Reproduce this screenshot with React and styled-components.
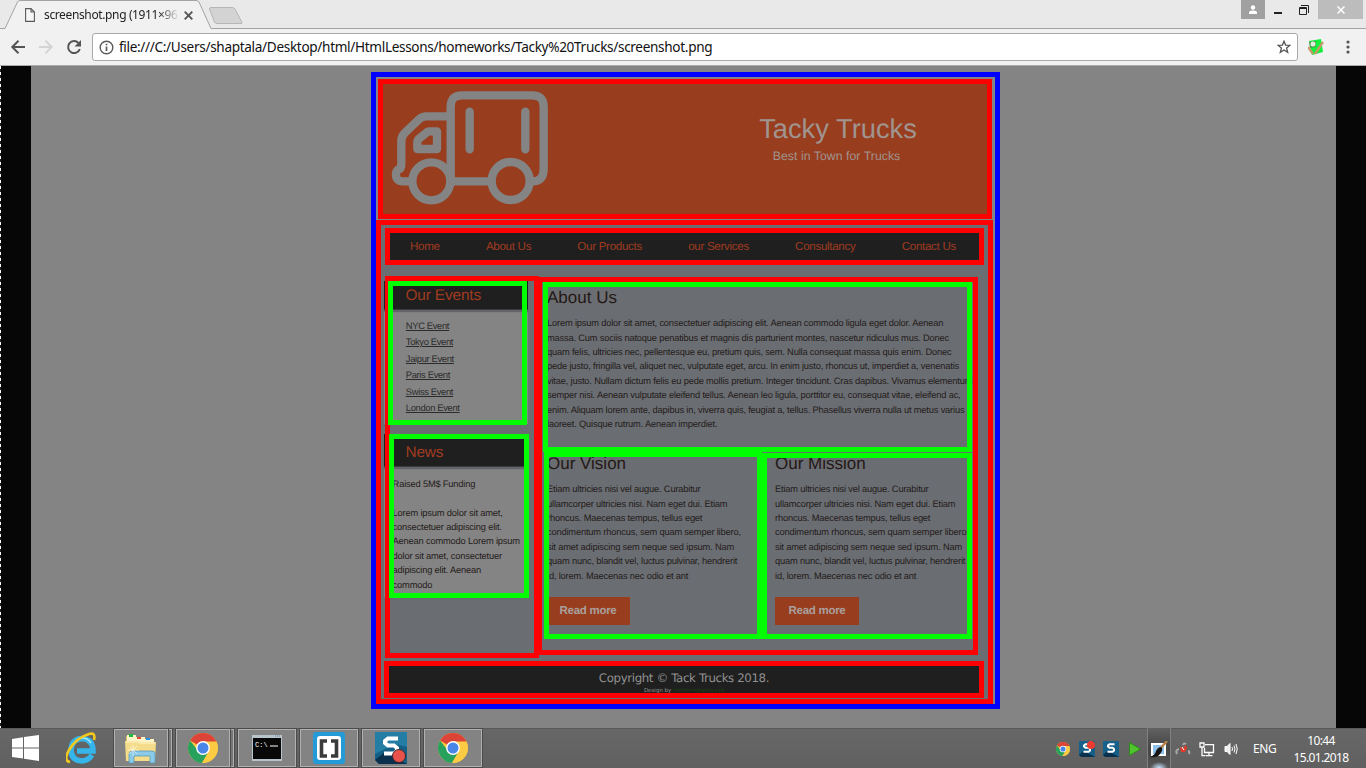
import React from "react";
import styled, { createGlobalStyle, css } from "styled-components";

const Global = createGlobalStyle`
  * { box-sizing: border-box; }
  body { margin: 0; width: 1366px; height: 768px; overflow: hidden; background: #848484; font-family: "Liberation Sans", Arial, sans-serif; }
  h1, h2, p, ul { margin: 0; padding: 0; font-weight: normal; }
  svg { display: block; flex: none; }
`;

const Screen = styled.div`
  width: 1366px;
  height: 768px;
  display: flex;
  flex-direction: column;
`;

/* ---------- browser chrome ---------- */
const TabStrip = styled.div`
  height: 29px;
  flex: none;
  display: flex;
  align-items: flex-start;
  background: #e9e9e9;
  border-bottom: 1px solid #a3a3a3;
`;
const Tab = styled.div`
  position: relative;
  width: 212px;
  height: 29px;
  display: flex;
  align-items: center;
  padding: 1px 0 0 25px;
`;
const TabShape = styled.svg`
  position: absolute;
  left: 0;
  top: 0;
`;
const TabTitle = styled.span`
  position: relative;
  width: 133px;
  margin-left: 9px;
  white-space: nowrap;
  font: 12px/18px "Noto Sans", sans-serif;
  letter-spacing: -0.37px;
  color: #222;
  mask-image: linear-gradient(90deg, #000 86%, transparent 102%);
`;
const TabIcon = styled.svg`
  position: relative;
`;
const TabClose = styled(TabIcon)`
  margin-left: 7px;
`;
const WindowButtons = styled.div`
  margin-left: auto;
  display: flex;
  height: 19px;
`;
const WindowButton = styled.div`
  width: ${(p) => p.$w}px;
  height: 19px;
  margin-right: ${(p) => p.$gap || 0}px;
  background: ${(p) => p.$bg || "transparent"};
  display: flex;
  align-items: center;
  justify-content: center;
`;
const Toolbar = styled.div`
  height: 37px;
  flex: none;
  display: flex;
  align-items: center;
  padding: 0 10px;
  background: #f1f1f1;
  border-bottom: 1px solid #aaa;
`;
const AddressBar = styled.div`
  width: 1206px;
  height: 28px;
  margin-left: 10px;
  padding: 0 6px;
  display: flex;
  align-items: center;
  gap: 5px;
  background: #fff;
  border: 1px solid #a9a9a9;
  border-radius: 3px;
`;
const Url = styled.span`
  flex: 1;
  font: 13.6px/20px "Noto Sans", sans-serif;
  letter-spacing: -0.33px;
  color: #111;
  white-space: nowrap;
`;
const Extension = styled.svg`
  margin-left: 10px;
`;
const MenuDots = styled.svg`
  margin-left: 22px;
`;

/* ---------- viewport ---------- */
const Viewport = styled.div`
  height: 662px;
  flex: none;
  display: flex;
  background: #848484;
`;
const Band = styled.div`
  width: ${(p) => p.$w}px;
  background: #060606;
`;
const Dashes = styled.div`
  width: 1px;
  background: repeating-linear-gradient(#fff 0 3px, #222 3px 6px);
`;
const Stage = styled.div`
  width: 1305px;
  padding: 6px 0 0 340px;
`;
const Site = styled.div`
  width: 629px;
  height: 637px;
  border: 5px solid #00f;
  text-rendering: geometricPrecision;
`;
const Header = styled.header`
  width: 614px;
  height: 140px;
  margin: 2px 0 1px 2px;
  border: 5px solid #f00;
  background: #983d1e;
  display: flex;
  justify-content: space-between;
  padding: 5px 70px 0 7px;
`;
const Brand = styled.div`
  width: 158px;
  padding-top: 24px;
  text-align: center;
  white-space: nowrap;
  color: #a0948f;
`;
const BrandName = styled.h1`
  font-size: 27.3px;
  line-height: 32px;
`;
const Tagline = styled.p`
  font-size: 12.3px;
  line-height: 16px;
  margin-top: 3px;
  padding-right: 3px;
  letter-spacing: 0.03px;
`;
const Main = styled.main`
  width: 617px;
  height: 484px;
  border: 5px solid #f00;
  background: #6a6d72;
`;
const Nav = styled.nav`
  width: 599px;
  height: 37px;
  margin: 3px 0 11px 4px;
  padding: 0 23px 0 20px;
  border: 5px solid #f00;
  background: #1f1f1f;
  display: flex;
  justify-content: space-between;
  align-items: center;
  color: #a03b20;
  font-size: 11.6px;
  letter-spacing: -0.31px;
  line-height: 14px;
`;
const Columns = styled.div`
  height: 382px;
  display: flex;
  align-items: flex-start;
  padding-left: 4px;
`;
/* Coloured rectangle laid over the block that it marks. */
const Outline = styled.div`
  position: absolute;
  inset: ${(p) => p.$inset || "0"};
  border: 5px solid ${(p) => p.$color};
  z-index: ${(p) => p.$z || 1};
`;
const Sidebar = styled.aside`
  position: relative;
  width: 154px;
  height: 382px;
  padding-top: 5px;
`;
const Widget = styled.section`
  position: relative;
  width: 144px;
  height: ${(p) => p.$h}px;
  margin: 0 0 10px -1px;
  background: #848484;
`;
const WidgetTitle = styled.h2`
  height: ${(p) => p.$h}px;
  padding: ${(p) => p.$top}px 0 0 21.5px;
  background: #1f1f1f;
  border-bottom: 1px solid #3a3b3e;
  box-shadow: 0 2px 1px #62646a;
  color: #a03b20;
  font-size: 15.4px;
  letter-spacing: -0.15px;
  line-height: 18px;
`;
const EventList = styled.ul`
  padding: 8px 0 0 21.8px;
  list-style: none;
  font-size: 9.4px;
  letter-spacing: -0.34px;
  line-height: 16.4px;
  color: #2b2b2b;
  li { height: 16.4px; text-decoration: underline; }
`;
const copy = css`
  font-size: 9.3px;
  line-height: 14.36px;
  letter-spacing: -0.175px;
  color: #241c1a;
  white-space: pre;
`;
const NewsText = styled.p`
  ${copy}
  padding: 10px 0 0 8.6px;
`;
const Content = styled.div`
  position: relative;
  width: 441px;
  height: 378px;
  margin: 1px 0 0 -2px;
  padding: 5px 6px 0 6px;
`;
const Block = styled.section`
  position: relative;
  width: ${(p) => p.$w}px;
  height: ${(p) => p.$h}px;
  padding: ${(p) => p.$pad};
`;
const Pair = styled.div`
  display: flex;
  padding-left: 1px;
`;
const Heading = styled.h2`
  font-size: 17px;
  line-height: 20px;
  color: #241815;
  white-space: nowrap;
`;
const Copy = styled.p`
  ${copy}
  margin-top: ${(p) => p.$top}px;
`;
const ReadMore = styled.div`
  width: 84px;
  height: 28px;
  margin: 14px 0 0 ${(p) => p.$shift || 0}px;
  background: #983d1e;
  color: #a9a09d;
  font-size: 11.5px;
  letter-spacing: -0.28px;
  font-weight: bold;
  line-height: 28px;
  text-align: center;
`;
const Footer = styled.footer`
  width: 600px;
  height: 37px;
  margin: 3px 0 0 3px;
  padding-top: 4px;
  border: 5px solid #f00;
  background: #1f1f1f;
  overflow: hidden;
  text-align: center;
  color: #919191;
  font: 11.8px/17px "DejaVu Sans", sans-serif;
  letter-spacing: -0.38px;
`;
const Credit = styled.div`
  font-size: 5.5px;
  line-height: 8px;
  letter-spacing: 0;
  span { color: #1d4416; }
`;

/* ---------- taskbar ---------- */
const Taskbar = styled.div`
  height: 40px;
  flex: none;
  display: flex;
  align-items: stretch;
  background: linear-gradient(#5a5a5a 0 1px, #676767 1px, #606060);
`;
const Launcher = styled.div`
  width: ${(p) => p.$w}px;
  display: flex;
  align-items: center;
  justify-content: center;
`;
const TaskButton = styled.div`
  width: ${(p) => p.$w}px;
  height: 40px;
  margin-right: ${(p) => p.$gap}px;
  display: flex;
  align-items: center;
  justify-content: center;
  border: 1px solid #4b4b4b;
  box-shadow: inset 0 0 0 1px #b0b0b0;
  background: #838383;
`;
const StackEdge = styled.div`
  width: 5px;
  height: 40px;
  margin: 0 2px 0 -1px;
  border: 1px solid #4b4b4b;
  box-shadow: inset -1px 1px 0 #b0b0b0, inset 0 -1px 0 #b0b0b0;
  background: #777;
`;
const Tray = styled.div`
  margin-left: auto;
  display: flex;
  align-items: center;
  padding-right: 17px;
  color: #fff;
  font: 12px/17px "Noto Sans", sans-serif;
`;
const TrayIcon = styled.div`
  width: 24px;
  height: 40px;
  padding-top: 2px;
  display: flex;
  align-items: center;
  justify-content: center;
  ${(p) => p.$active && css`
    background: radial-gradient(ellipse 9px 6px at 50% 100%, #c8e4ff, transparent), linear-gradient(#626262, #454545 50%, #565656);
    border: solid #808080;
    border-width: 0 1px;
  `}
`;
const Language = styled.div`
  width: 24px;
  margin: 1px 16px 0 10px;
  letter-spacing: -0.4px;
`;
const Clock = styled.div`
  width: 56px;
  text-align: center;
  letter-spacing: -0.65px;
  white-space: nowrap;
  padding-top: 1px;
`;

const Truck = () => (
  <svg width="160" height="117" viewBox="75 69 480 351" fill="none" stroke="#848484" strokeWidth="25" strokeLinecap="round" strokeLinejoin="round">
    <path d="M257 340V122Q257 88 291 88H502Q536 88 536 122V308Q536 346 503 346M262 346H372" />
    <path strokeLinecap="butt" d="M257 151H183Q172 151 163 159L119 201Q109 211 109 225V295Q109 309 101 310Q93 314 93 326Q93 346 113 346H134" />
    <path d="M194 196H216V249H157V228Q157 223 161 219L187 198Q190 196 194 196Z" />
    <path d="M314 137V250M481 137V250" />
    <circle cx="199" cy="346" r="57" />
    <circle cx="437" cy="345" r="57" />
  </svg>
);

const Chrome = ({ size }) => (
  <svg width={size} height={size} viewBox="0 0 30 30">
    <circle cx="15" cy="15" r="15" fill="#fbcb43" />
    <path d="M15 15L2 7.500A15 15 0 0 1 28 7.500L28.500 9H15Z" fill="#dc4437" />
    <path d="M15 15L9 16.500L2 7.500A15 15 0 0 0 14 30L21 18Z" fill="#28a15c" />
    <path d="M15 8.500H28.300A15 15 0 0 1 14 30L21 18Z" fill="#fbcb43" />
    <circle cx="15" cy="15" r="6.900" fill="#fff" />
    <circle cx="15" cy="15" r="5.500" fill="#4a86e8" />
  </svg>
);

const Snag = ({ size, dot }) => (
  <svg width={size} height={size} viewBox="0 0 32 32">
    <path d="M0 0H32V32H4L0 28Z" fill="#145f86" />
    <path d="M0 0H32V15L20 12L0 22Z" fill={size > 20 ? "#237da5" : "#17618a"} />
    <path d="M0 28L10 20L32 32H4Z" fill="#0b304d" />
    <path d="M23 6.500H13L10 9V11L13 13.500H19L22 16V19L19 21.500H9" fill="none" stroke="#fff" strokeWidth="4" />
    {dot === "low" && <circle cx="24" cy="24" r="6.500" fill="#e8524b" stroke="#43282f" />}
    {dot === "high" && <circle cx="24" cy="8" r="8" fill="#f03b30" />}
  </svg>
);

const Folder = () => (
  <svg width="32" height="32" viewBox="0 0 32 32">
    <path d="M1 5Q1 4 2 4H9L11 7H29V29H1Z" fill="#dfbf62" />
    <path d="M2 3H11V12H2ZM10 5H20V12H10ZM18 7H29V12H18Z" fill="#fff3c8" />
    <path d="M4 2H8V5H4Z" fill="#1cb93b" /><path d="M12 5H16V7H12Z" fill="#e04a35" /><path d="M21 6H25V8H21Z" fill="#2494e6" />
    <path d="M0 9H13L15 10H31L30 29H1Z" fill="#f4dc8a" />
    <path d="M1 10H13L15 11H30" fill="none" stroke="#fff5cb" />
    <path d="M4 31V22Q4 19 7 19H27Q30 19 30 22V31H25V24H9V31Z" fill="#8ccbe8" stroke="#4f94b8" strokeWidth=".7" />
    <path d="M8 13V24M3 18H14M5 15L12 22M12 14L4 22" stroke="#fff" strokeWidth=".7" opacity=".8" />
  </svg>
);

const ABOUT = `Lorem ipsum dolor sit amet, consectetuer adipiscing elit. Aenean commodo ligula eget dolor. Aenean
massa. Cum sociis natoque penatibus et magnis dis parturient montes, nascetur ridiculus mus. Donec
quam felis, ultricies nec, pellentesque eu, pretium quis, sem. Nulla consequat massa quis enim. Donec
pede justo, fringilla vel, aliquet nec, vulputate eget, arcu. In enim justo, rhoncus ut, imperdiet a, venenatis
vitae, justo. Nullam dictum felis eu pede mollis pretium. Integer tincidunt. Cras dapibus. Vivamus elementum
semper nisi. Aenean vulputate eleifend tellus. Aenean leo ligula, porttitor eu, consequat vitae, eleifend ac,
enim. Aliquam lorem ante, dapibus in, viverra quis, feugiat a, tellus. Phasellus viverra nulla ut metus varius
laoreet. Quisque rutrum. Aenean imperdiet.`;

const ETIAM = `Etiam ultricies nisi vel augue. Curabitur
ullamcorper ultricies nisi. Nam eget dui. Etiam
rhoncus. Maecenas tempus, tellus eget
condimentum rhoncus, sem quam semper libero,
sit amet adipiscing sem neque sed ipsum. Nam
quam nunc, blandit vel, luctus pulvinar, hendrerit
id, lorem. Maecenas nec odio et ant`;

const NEWS = `Raised 5M$ Funding

Lorem ipsum dolor sit amet,
consectetuer adipiscing elit.
Aenean commodo Lorem ipsum
dolor sit amet, consectetuer
adipiscing elit. Aenean
commodo`;

const LINKS = ["Home", "About Us", "Our Products", "our Services", "Consultancy", "Contact Us"];
const EVENTS = ["NYC Event", "Tokyo Event", "Jaipur Event", "Paris Event", "Swiss Event", "London Event"];

function BrowserChrome() {
  return (
    <>
      <TabStrip>
        <Tab>
          <TabShape width="246" height="29" viewBox="0 0 246 29">
            <path d="M0 28.500H5L17.500 2Q18.500 .500 20 .500H196Q198 .500 199 2L211 28.500V29H0Z" fill="#f1f1f1" />
            <path d="M0 28.500H5L17.500 2Q18.500 .500 20 .500H196Q198 .500 199 2L211 28.500" fill="none" stroke="#a3a3a3" />
            <path d="M211 7.500H232.500Q234 7.500 235 9L242 22.500Q242.500 23.500 241 23.500H217Q215.500 23.500 214.500 22L209.500 9Q209.500 7.500 211 7.500Z" fill="#d3d3d3" stroke="#b6b6b6" />
          </TabShape>
          <TabIcon width="10" height="14" viewBox="0 0 10 14" fill="#f7f7f7" stroke="#5a5a5a" strokeWidth="1.100">
            <path d="M.600 .600H6L9.400 4V13.400H.600ZM6 .600V4H9.400" />
          </TabIcon>
          <TabTitle>screenshot.png (1911×96</TabTitle>
          <TabClose width="9" height="9" viewBox="0 0 9 9" stroke="#555" strokeWidth="1.900"><path d="M.700 .700L8.300 8.300M8.300 .700L.700 8.300" /></TabClose>
        </Tab>
        <WindowButtons>
          <WindowButton $w={24} $bg="#a0a0a0">
            <svg width="10" height="10" viewBox="0 0 10 10" fill="#fff"><circle cx="5" cy="2.500" r="2.200" /><path d="M1 9V7.500Q1 5.500 5 5.500T9 7.500V9Z" /></svg>
          </WindowButton>
          <WindowButton $w={26}>
            <svg width="8" height="8"><path d="M0 6H8V8H0Z" fill="#222" /></svg>
          </WindowButton>
          <WindowButton $w={26} $gap={1}>
            <svg width="10" height="10" viewBox="0 0 10 10" fill="none" stroke="#222"><path d="M2 .500H9.500V8M.500 2.500H7.500V9.500H.500ZM.500 3.500H7.500" /></svg>
          </WindowButton>
          <WindowButton $w={45} $bg="#bcbcbc" $gap={3}>
            <svg width="8" height="8" viewBox="0 0 8 8" stroke="#fff" strokeWidth="1.500"><path d="M.500 .500L7.500 7.500M7.500 .500L.500 7.500" /></svg>
          </WindowButton>
        </WindowButtons>
      </TabStrip>
      <Toolbar>
        <svg width="72" height="16" viewBox="0 0 72 16" fill="none" strokeWidth="2">
          <path d="M15 8H2.500M8.500 1.800L2.300 8L8.500 14.200" stroke="#555" />
          <path d="M29 8H41.500M35.500 1.800L41.700 8L35.500 14.200" stroke="#d4d4d4" />
          <path d="M68.500 4A6 6 0 1 0 69.800 10" stroke="#555" />
          <path d="M71 1V7.500H64.500Z" fill="#555" />
        </svg>
        <AddressBar>
          <svg width="15" height="15" viewBox="0 0 15 15" fill="none" stroke="#5a5a5a" strokeWidth="1.400"><circle cx="7.500" cy="7.500" r="6.300" /><path d="M7.500 6.500V11M7.500 3.700V5.200" strokeWidth="1.700" /></svg>
          <Url>file:///C:/Users/shaptala/Desktop/html/HtmlLessons/homeworks/Tacky%20Trucks/screenshot.png</Url>
          <svg width="14" height="14" viewBox="0 0 14 14" fill="none" stroke="#555" strokeWidth="1.300"><path d="M7 1.200L8.600 5.100L12.900 5.400L9.600 8.100L10.700 12.400L7 10L3.300 12.400L4.400 8.100L1.100 5.400L5.400 5.100Z" /></svg>
        </AddressBar>
        <Extension width="16" height="16" viewBox="0 0 16 16">
          <path d="M1 2L13 0L15 13L4 16Z" fill="#12f03c" />
          <path d="M1 3L8 2V8L2 9Z" fill="#4e9b4a" /><circle cx="5" cy="5" r="2.500" fill="#dcefdc" />
          <path d="M15 3L7 15M0 8L5 15" stroke="#c79b68" strokeWidth="2.300" />
        </Extension>
        <MenuDots width="4" height="14" viewBox="0 0 4 14" fill="#555"><circle cx="2" cy="2" r="1.600" /><circle cx="2" cy="7" r="1.600" /><circle cx="2" cy="12" r="1.600" /></MenuDots>
      </Toolbar>
    </>
  );
}

function TackyTrucks() {
  return (
    <Site>
      <Header>
        <Truck />
        <Brand>
          <BrandName>Tacky Trucks</BrandName>
          <Tagline>Best in Town for Trucks</Tagline>
        </Brand>
      </Header>
      <Main>
        <Nav>{LINKS.map((l) => <span key={l}>{l}</span>)}</Nav>
        <Columns>
          <Sidebar>
            <Widget $h={143}>
              <WidgetTitle $h={29} $top={6}>Our Events</WidgetTitle>
              <EventList>{EVENTS.map((e) => <li key={e}>{e}</li>)}</EventList>
              <Outline $color="#0f0" $z={3} $inset="0 1px -1px 4px" />
            </Widget>
            <Widget $h={163}>
              <WidgetTitle $h={33} $top={10}>News</WidgetTitle>
              <NewsText>{NEWS}</NewsText>
              <Outline $color="#0f0" $z={3} $inset="0 -1px -1px 5px" />
            </Widget>
            <Outline $color="#f00" />
          </Sidebar>
          <Content>
            <Outline $color="#f00" />
            <Block $w={429} $h={170} $pad="6px 0 0 4px">
              <Heading>About Us</Heading>
              <Copy $top={8.4}>{ABOUT}</Copy>
              <Outline $color="#0f0" $z={2} />
            </Block>
            <Pair>
              <Block $w={218} $h={187} $pad="2px 0 0 3px">
                <Heading>Our Vision</Heading>
                <Copy $top={8.4}>{ETIAM}</Copy>
                <ReadMore $shift={-1}>Read more</ReadMore>
                <Outline $color="#0f0" $z={2} />
              </Block>
              <Block $w={210} $h={187} $pad="2px 0 0 13px">
                <Heading>Our Mission</Heading>
                <Copy $top={8.4}>{ETIAM}</Copy>
                <ReadMore>Read more</ReadMore>
                <Outline $color="#0f0" $z={2} $inset="1px 0 0 0" />
              </Block>
            </Pair>
          </Content>
        </Columns>
        <Footer>
          Copyright © Tack Trucks 2018.
          <Credit>Design by <span>htmltemplates.net</span></Credit>
        </Footer>
      </Main>
    </Site>
  );
}

function WindowsTaskbar() {
  return (
    <Taskbar>
      <Launcher $w={50}>
        <svg width="27" height="26" viewBox="0 0 27 26" fill="#fff"><path d="M0 4L11 2.300V12.500H0ZM12 2.100L27 0V12.500H12ZM0 13.500H11V23.500L0 22ZM12 13.500H27V26L12 23.800Z" /></svg>
      </Launcher>
      <Launcher $w={63}>
        <svg width="32" height="32" viewBox="1 0 32 32" fill="none">
          <path d="M27 23Q23 29 16.500 29Q6 28 6 17.500Q7 7 17 6.500Q28 7 28 19H12" stroke="#35b5ea" strokeWidth="5.500" />
          <path d="M9 12Q12 6 17 6Q23 6 26 11" stroke="#a5e7fb" strokeWidth="1.500" />
          <path d="M5 30Q-2 29 4 18Q11 6 24 2Q31 0 29 8" stroke="#f3c81e" strokeWidth="2.600" />
        </svg>
      </Launcher>
      <TaskButton $w={56} $gap={0}><Folder /></TaskButton><StackEdge />
      <TaskButton $w={56} $gap={0}><Chrome size={30} /></TaskButton><StackEdge />
      <TaskButton $w={60} $gap={2}>
        <svg width="30" height="26" viewBox="0 0 30 26"><path d="M0 0H30V26H0Z" fill="#b8c4cc" /><path d="M1 3H29V24H1Z" fill="#080808" /><path d="M23 1H28" stroke="#6386ad" strokeDasharray="1 1" /><text x="3" y="12" fill="#fff" fontFamily="Liberation Mono, monospace" fontSize="7">C:\</text><path d="M18 11H26" stroke="#fff" /></svg>
      </TaskButton>
      <TaskButton $w={60} $gap={2}>
        <svg width="32" height="32" viewBox="0 0 32 32"><rect width="32" height="32" rx="3" fill="#239bd9" /><rect x="4" y="4" width="24" height="24" rx="3" fill="#fff" /><path d="M14 9H8.500V24H14M18 9H23.500V24H18" fill="none" stroke="#3b3b3b" strokeWidth="3.600" /></svg>
      </TaskButton>
      <TaskButton $w={60} $gap={2}><Snag size={32} dot="low" /></TaskButton>
      <TaskButton $w={60} $gap={0}><Chrome size={30} /></TaskButton>
      <Tray>
        <TrayIcon><Chrome size={14} /></TrayIcon>
        <TrayIcon><Snag size={16} dot="high" /></TrayIcon>
        <TrayIcon><Snag size={16} /></TrayIcon>
        <TrayIcon><svg width="12" height="14" viewBox="0 0 12 14"><path d="M.500 .500L11.500 7L.500 13.500Z" fill="#4fc42f" stroke="#2d8a1b" /></svg></TrayIcon>
        <TrayIcon $active>
          <svg width="18" height="17" viewBox="0 0 18 17"><path d="M1 2H16V15H1Z" fill="#fff" /><path d="M3 4H14V13H3Z" fill="#8fc0ea" /><path d="M17 0L9 9" stroke="#b98146" strokeWidth="2.500" /><path d="M11 6Q14 8 10 13Q7 17 0 16Q5 14 6 10Q8 6 11 6Z" fill="#151515" /></svg>
        </TrayIcon>
        <TrayIcon>
          <svg width="16" height="14" viewBox="0 0 16 14"><path d="M2 12Q0 8 4 7M8 3Q9 .500 11 2M13 9Q15 9 14 12" stroke="#a8a8a8" strokeWidth="2" fill="none" /><path d="M5 5L8 6L11 3L12 6L10 10L6 10Z" fill="#e33a2c" /><path d="M7 5L9 8" stroke="#fff" /></svg>
        </TrayIcon>
        <TrayIcon>
          <svg width="16" height="15" viewBox="0 0 16 15" fill="none" stroke="#fff" strokeWidth="1.300"><path d="M6 2.700H14.500V10.500H5.500V6M10 10.500V13.500M6.500 13.700H13.500M1 1H5V5H1ZM3 5V13.700H6" /></svg>
        </TrayIcon>
        <TrayIcon>
          <svg width="14" height="14" viewBox="0 0 14 14" fill="none" stroke="#fff"><path d="M1 4.500H3L6 1.500V12.500L3 9.500H1Z" fill="#eee" /><path d="M8 5Q9 7 8 9M10 3.500Q12 7 10 10.500M12 2Q14.500 7 12 12" /></svg>
        </TrayIcon>
        <Language>ENG</Language>
        <Clock>10:44<br />15.01.2018</Clock>
      </Tray>
    </Taskbar>
  );
}

export default function App() {
  return (
    <>
      <Global />
      <Screen>
        <BrowserChrome />
        <Viewport>
          <Dashes />
          <Band $w={30} />
          <Stage><TackyTrucks /></Stage>
          <Band $w={30} />
        </Viewport>
        <WindowsTaskbar />
      </Screen>
    </>
  );
}
